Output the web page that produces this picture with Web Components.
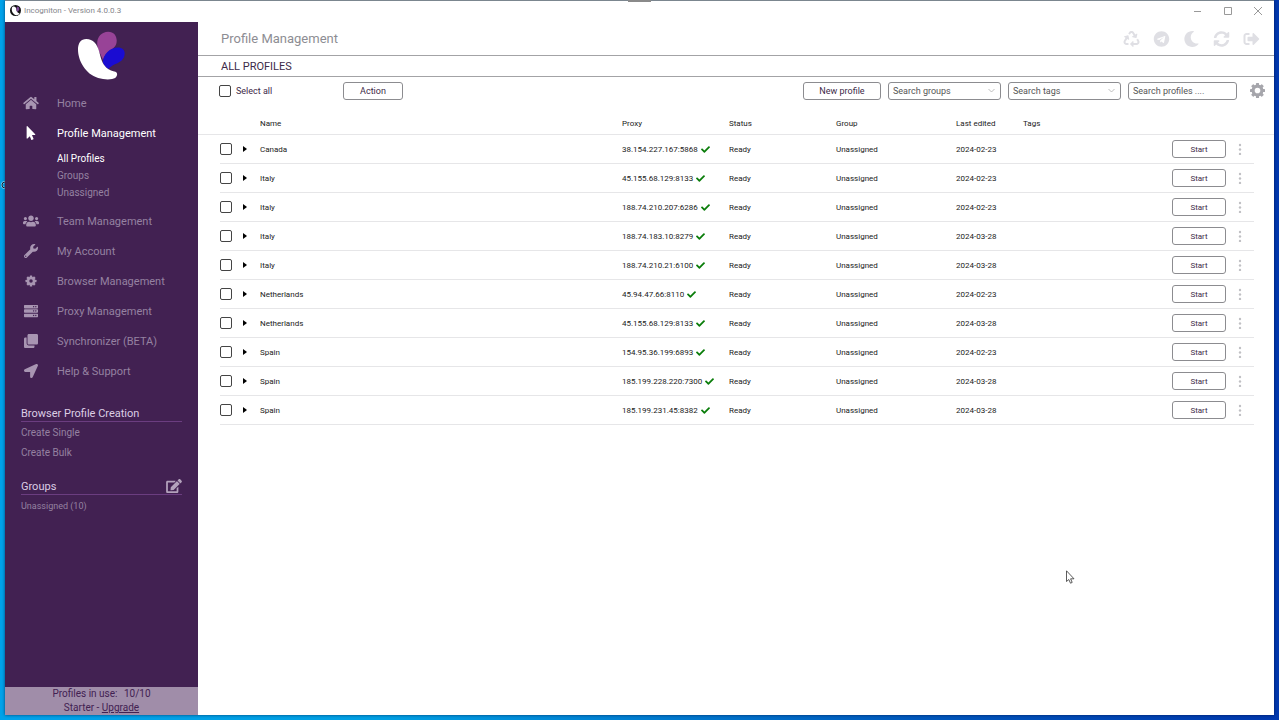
<!DOCTYPE html>
<html lang="en">
<head>
<meta charset="utf-8">
<title>Incogniton - Version 4.0.0.3</title>
<style>
    html, body {
        margin: 0;
        height: 100%;
    }

    body {
        font-family: Roboto, "Liberation Sans", sans-serif;
        font-size: 8px;
        color: #222;
        background: linear-gradient(90deg, #00a2ea 0%, #00a0e4 30%, #0058bc 72%, #0038ae 100%);
        --color-primary: #422152;
        --color-muted: #9581a1;
        --color-icon: #a895b2;
        --color-line: #8c8c90;
    }
</style>
</head>
<body>
<app-window>
    <title-bar slot="title">Incogniton - Version 4.0.0.3</title-bar>
    <side-bar slot="side">
        <nav-item icon="home">Home</nav-item>
        <nav-item icon="pointer" active>Profile Management
            <sub-link slot="sub" active>All Profiles</sub-link>
            <sub-link slot="sub">Groups</sub-link>
            <sub-link slot="sub">Unassigned</sub-link>
        </nav-item>
        <nav-item icon="users">Team Management</nav-item>
        <nav-item icon="wrench">My Account</nav-item>
        <nav-item icon="gear-small">Browser Management</nav-item>
        <nav-item icon="server">Proxy Management</nav-item>
        <nav-item icon="clone">Synchronizer (BETA)</nav-item>
        <nav-item icon="arrow">Help &amp; Support</nav-item>
        <side-section slot="sections" heading="Browser Profile Creation">
            <side-link>Create Single</side-link>
            <side-link>Create Bulk</side-link>
        </side-section>
        <side-section slot="sections" heading="Groups" editable>
            <side-link small>Unassigned (10)</side-link>
        </side-section>
        <plan-info slot="footer" used="10/10" plan="Starter"></plan-info>
    </side-bar>
    <page-header heading="Profile Management" subheading="ALL PROFILES"></page-header>
    <tool-bar></tool-bar>
    <profile-table></profile-table>
</app-window>
<mouse-cursor></mouse-cursor>

<script>
const tooth = (n, y, h, w) => Array.from({ length: n }, (_, i) =>
    `<rect x="${12 - w / 2}" y="${y}" width="${w}" height="${h}" rx="1" transform="rotate(${i * 360 / n} 12 12)"/>`).join('');

// name: [viewBox, markup]
const ICONS = {
    'home': ['0 0 576 512', '<path d="M280.37 148.26L96 300.11V464a16 16 0 0 0 16 16l112.06-.29a16 16 0 0 0 15.92-16V368a16 16 0 0 1 16-16h64a16 16 0 0 1 16 16v95.64a16 16 0 0 0 16 16.05L464 480a16 16 0 0 0 16-16V300L295.67 148.26a12.19 12.19 0 0 0-15.3 0zM571.6 251.47L488 182.56V44.05a12 12 0 0 0-12-12h-56a12 12 0 0 0-12 12v72.61L318.47 43a48 48 0 0 0-61 0L4.34 251.47a12 12 0 0 0-1.6 16.9l25.5 31A12 12 0 0 0 45.15 301l235.22-193.74a12.19 12.19 0 0 1 15.3 0L530.9 301a12 12 0 0 0 16.9-1.6l25.5-31a12 12 0 0 0-1.7-16.93z"/>'],
    'pointer': ['0 0 320 512', '<path d="M302.189 329.126H196.105l55.831 135.993c3.889 9.428-.555 19.999-9.444 23.999l-49.165 21.427c-9.165 4-19.443-.571-23.332-9.714l-53.053-129.136-86.664 89.138C18.729 472.71 0 463.554 0 447.977V18.299C0 1.899 19.921-6.096 30.277 5.443l284.412 292.542c11.472 11.179 3.007 31.141-12.5 31.141z"/>'],
    'users': ['0 0 640 512', '<path d="M96 224c35.3 0 64-28.7 64-64s-28.7-64-64-64-64 28.7-64 64 28.7 64 64 64zm448 0c35.3 0 64-28.7 64-64s-28.7-64-64-64-64 28.7-64 64 28.7 64 64 64zm32 32h-64c-17.6 0-33.5 7.1-45.1 18.6 40.3 22.1 68.9 62 75.1 109.4h66c17.7 0 32-14.3 32-32v-32c0-35.3-28.7-64-64-64zm-256 0c61.9 0 112-50.1 112-112S381.9 32 320 32 208 82.1 208 144s50.1 112 112 112zm76.8 32h-8.3c-20.8 10-43.9 16-68.5 16s-47.6-6-68.5-16h-8.3C179.6 288 128 339.6 128 403.2V432c0 26.5 21.5 48 48 48h288c26.5 0 48-21.5 48-48v-28.8c0-63.6-51.6-115.2-115.2-115.2zm-223.7-13.4C161.5 263.1 145.6 256 128 256H64c-35.3 0-64 28.7-64 64v32c0 17.7 14.3 32 32 32h65.9c6.3-47.4 34.9-87.3 75.2-109.4z"/>'],
    'wrench': ['0 0 512 512', '<path d="M507.73 109.1c-2.24-9.03-13.54-12.09-20.12-5.51l-74.36 74.36-67.88-11.31-11.31-67.88 74.36-74.36c6.62-6.62 3.43-17.9-5.66-20.16-47.38-11.74-99.55.91-136.58 37.93-39.64 39.64-50.55 97.1-34.05 147.2L18.74 402.76c-24.99 24.99-24.99 65.51 0 90.5 24.99 24.99 65.51 24.99 90.5 0l213.21-213.21c50.12 16.71 107.47 5.68 147.37-34.22 37.07-37.07 49.7-89.32 37.91-136.73zM64 472c-13.25 0-24-10.75-24-24 0-13.26 10.75-24 24-24s24 10.74 24 24c0 13.25-10.75 24-24 24z"/>'],
    'gear-small': ['0 0 24 24', `<circle cx="12" cy="12" r="6" fill="none" stroke="currentColor" stroke-width="5"/>${tooth(8, 1, 4, 5)}`],
    'gear': ['0 0 24 24', `<circle cx="12" cy="12" r="7" fill="none" stroke="currentColor" stroke-width="5"/>${tooth(8, 0, 5, 5)}`],
    'server': ['0 0 512 512', '<path fill-rule="evenodd" d="M24 32h464q24 0 24 24v80q0 24-24 24H24q-24 0-24-24V56q0-24 24-24zM432 72a24 24 0 1 0 .1 0zM352 72a24 24 0 1 0 .1 0zM24 192h464q24 0 24 24v80q0 24-24 24H24q-24 0-24-24v-80q0-24 24-24zM432 232a24 24 0 1 0 .1 0zM352 232a24 24 0 1 0 .1 0zM24 352h464q24 0 24 24v80q0 24-24 24H24q-24 0-24-24v-80q0-24 24-24zM432 392a24 24 0 1 0 .1 0zM352 392a24 24 0 1 0 .1 0z"/>'],
    'clone': ['0 0 512 512', '<path d="M464 0c26.51 0 48 21.49 48 48v288c0 26.51-21.49 48-48 48H176c-26.51 0-48-21.49-48-48V48c0-26.51 21.49-48 48-48h288M176 416c-44.112 0-80-35.888-80-80V128H48c-26.51 0-48 21.49-48 48v288c0 26.51 21.49 48 48 48h288c26.51 0 48-21.49 48-48v-48H176z"/>'],
    'arrow': ['0 0 512 512', '<path d="M444.52 3.52L28.74 195.42c-47.97 22.39-31.98 92.75 19.19 92.75h175.91v175.91c0 51.17 70.36 67.17 92.75 19.19l191.9-415.78c15.99-38.39-25.59-79.97-63.97-63.97z"/>'],
    'edit': ['0 0 576 512', '<path d="M402.6 83.2l90.2 90.2c3.8 3.8 3.8 10 0 13.8L274.4 405.6l-92.8 10.3c-12.4 1.4-22.9-9.1-21.5-21.5l10.3-92.8L388.8 83.2c3.8-3.8 10-3.8 13.8 0zm162-22.9l-48.8-48.8c-15.2-15.2-39.9-15.2-55.2 0l-35.4 35.4c-3.8 3.8-3.8 10 0 13.8l90.2 90.2c3.8 3.8 10 3.8 13.8 0l35.4-35.4c15.2-15.3 15.2-40 0-55.2zM384 346.2V448H64V128h229.8c3.2 0 6.2-1.3 8.5-3.5l40-40c7.6-7.6 2.2-20.5-8.5-20.5H48C21.5 64 0 85.5 0 112v352c0 26.5 21.5 48 48 48h352c26.5 0 48-21.5 48-48V306.2c0-10.7-12.9-16-20.5-8.5l-40 40c-2.2 2.3-3.5 5.3-3.5 8.5z"/>'],
    'recycle': ['0 0 512 512', '<path d="M184.561 261.903c3.232 13.997-12.123 24.635-24.068 17.168l-40.736-25.455-50.867 81.402C55.606 356.273 70.96 384 96.012 384H148c6.627 0 12 5.373 12 12v40c0 6.627-5.373 12-12 12H96.115c-75.334 0-121.302-83.048-81.408-146.88l50.822-81.388-40.725-25.448c-12.081-7.547-8.966-25.961 4.879-29.158l110.237-25.45c8.611-1.988 17.201 3.381 19.189 11.99l25.452 110.237zm98.561-182.915l41.289 66.076-40.74 25.457c-12.051 7.528-9 25.953 4.879 29.158l110.237 25.45c8.672 1.999 17.215-3.438 19.189-11.99l25.45-110.237c3.197-13.844-11.99-24.719-24.068-17.168l-40.687 25.424-41.263-66.082c-37.521-60.033-125.209-60.171-162.816 0l-17.963 28.766c-3.51 5.62-1.8 13.021 3.82 16.533l33.919 21.195c5.62 3.512 13.024 1.803 16.536-3.817l17.961-28.743c12.712-20.341 41.973-19.676 54.257-.022zM497.288 301.12l-27.515-44.065c-3.511-5.623-10.916-7.334-16.538-3.821l-33.861 21.159c-5.62 3.512-7.33 10.915-3.818 16.536l27.564 44.112c13.257 21.211-2.057 48.96-27.136 48.96H320V336.02c0-14.213-17.242-21.383-27.313-11.313l-80 79.981c-6.249 6.248-6.249 16.379 0 22.627l80 79.989C302.689 517.308 320 510.3 320 495.989V448h95.88c75.274 0 121.335-82.997 81.408-146.88z"/>'],
    'telegram': ['0 0 496 512', '<path d="M248 8C111 8 0 119 0 256s111 248 248 248 248-111 248-248S385 8 248 8zm121.8 169.9l-40.7 191.8c-3 13.6-11.1 16.9-22.4 10.5l-62-45.7-29.9 28.8c-3.3 3.3-6.1 6.1-12.5 6.1l4.4-63.1 114.9-103.8c5-4.4-1.1-6.9-7.7-2.5l-142 89.4-61.2-19.1c-13.3-4.2-13.6-13.3 2.8-19.7l239.1-92.2c11.1-4 20.8 2.7 17.2 19.5z"/>'],
    'moon': ['0 0 512 512', '<path d="M283.211 512c78.962 0 151.079-35.925 198.857-94.792 7.068-8.708-.639-21.43-11.562-19.35-124.203 23.654-238.262-71.576-238.262-196.954 0-72.222 38.662-138.635 101.498-174.394 9.686-5.512 7.25-20.197-3.756-22.23A258.156 258.156 0 0 0 283.211 0c-141.309 0-256 114.511-256 256 0 141.309 114.511 256 256 256z"/>'],
    'sync': ['0 0 512 512', '<path d="M370.72 133.28C339.458 104.008 298.888 87.962 255.848 88c-77.458.068-144.328 53.178-162.791 126.85-1.344 5.363-6.122 9.15-11.651 9.15H24.103c-7.498 0-13.194-6.807-11.807-14.176C33.933 94.924 134.813 8 256 8c66.448 0 126.791 26.136 171.315 68.685L463.03 40.97C478.149 25.851 504 36.559 504 57.941V192c0 13.255-10.745 24-24 24H345.941c-21.382 0-32.09-25.851-16.971-40.971l41.75-41.749zM32 296h134.059c21.382 0 32.09 25.851 16.971 40.971l-41.75 41.75c31.262 29.273 71.835 45.319 114.876 45.28 77.418-.07 144.315-53.144 162.787-126.849 1.344-5.363 6.122-9.15 11.651-9.15h57.304c7.498 0 13.194 6.807 11.807 14.176C478.067 417.076 377.187 504 256 504c-66.448 0-126.791-26.136-171.315-68.685L48.97 471.03C33.851 486.149 8 475.441 8 454.059V320c0-13.255 10.745-24 24-24z"/>'],
    'sign-out': ['0 0 512 512', '<path d="M497 273L329 441c-15 15-41 4.5-41-17v-96H152c-13.3 0-24-10.7-24-24v-96c0-13.3 10.7-24 24-24h136V88c0-21.4 25.9-32 41-17l168 168c9.3 9.4 9.3 24.6 0 34zM192 436v-40c0-6.6-5.4-12-12-12H96c-17.7 0-32-14.3-32-32V160c0-17.7 14.3-32 32-32h84c6.6 0 12-5.4 12-12V76c0-6.6-5.4-12-12-12H96c-53 0-96 43-96 96v192c0 53 43 96 96 96h84c6.6 0 12-5.4 12-12z"/>'],
    'check': ['0 0 512 512', '<path d="M173.898 439.404l-166.4-166.4c-9.997-9.997-9.997-26.206 0-36.204l36.203-36.204c9.997-9.998 26.207-9.998 36.204 0L192 312.69 432.095 72.596c9.997-9.997 26.207-9.997 36.204 0l36.203 36.204c9.997 9.997 9.997 26.206 0 36.204l-294.4 294.401c-9.998 9.997-26.207 9.997-36.204-.001z"/>'],
    'caret': ['0 0 8 12', '<path d="M2 3l4 3-4 3z"/>'],
    'chevron': ['0 0 12 12', '<path d="M2 4l4 4 4-4" fill="none" stroke="currentColor"/>'],
    'dots': ['0 0 4 12', '<circle cx="2" cy="2" r="1.2"/><circle cx="2" cy="6.5" r="1.2"/><circle cx="2" cy="11" r="1.2"/>'],
    'minimize': ['0 0 10 10', '<path d="M1 5.5h7" stroke="currentColor"/>'],
    'maximize': ['0 0 10 10', '<path d="M1.500 1.500h7v7h-7z" fill="none" stroke="currentColor"/>'],
    'close': ['0 0 10 10', '<path d="M1 1l8 8M9 1L1 9" stroke="currentColor"/>'],
    'logo': ['232 94 146 148', '<path fill="#984397" d="M325 96c17 0 26 12 26 27 0 20-12 24-25 34-10 8-14 17-16 26-8-20-18-35-18-52 0-20 14-35 33-35z"/><path fill="#1a0cd2" d="M355 144c12 0 20 7 20 17 0 20-15 27-28 33-9 4-15 9-21 15-9-6-15-14-17-20 0-24 22-45 46-45z"/><path fill="#fff" d="M259 118c21 0 33 15 39 38 5 21 9 36 21 48 9 9 21 11 28 13 8 3 6 14-1 19-8 5-31 6-51 0-39-12-61-53-61-86 0-20 9-32 25-32z"/>'],
    'badge': ['0 0 24 24', '<circle cx="12" cy="12" r="12" fill="#111"/><path fill="#fff" d="M8 3c4 0 6 3 6 7s2 7 7 9c-4 4-9 4-12 1C5 17 3 12 4 7c0-3 2-4 4-4z"/><path fill="#7d4a96" d="M16 3c4 1 5 4 4 8-1 2-3 2-4 5-2-4-3-11 0-13z"/>'],
};

class AppIcon extends HTMLElement {
    constructor() {
        super();
        this.attachShadow({ mode: 'open' });
    }

    connectedCallback() {
        const [box, markup] = ICONS[this.getAttribute('name')];
        this.shadowRoot.innerHTML = `
        <style>
            :host {
                display: block;
                flex: none;
            }

            svg {
                display: block;
                width: 100%;
                height: 100%;
                fill: currentColor;
            }
        </style>
        <svg viewBox="${box}" aria-hidden="true">${markup}</svg>`;
    }
}
customElements.define('app-icon', AppIcon);

class AppWindow extends HTMLElement {
    constructor() {
        super();
        this.attachShadow({ mode: 'open' });
        this.shadowRoot.innerHTML = `
        <style>
            :host {
                display: grid;
                box-sizing: border-box;
                min-height: 100%;
                padding: 0 5px 5px;
            }

            .frame {
                display: grid;
                grid-template: auto 1fr / 193px 1fr;
                background: #fff;
                border-top: 1px solid #7b868f;
                box-shadow: 0 0 3px rgba(0, 0, 40, 0.6);
            }

            slot[name=title] {
                display: block;
                grid-column: 1 / -1;
            }

            slot[name=side] {
                display: grid;
            }

            .grip {
                position: absolute;
                top: 0;
                left: calc(50% - 12px);
                width: 23px;
                height: 2px;
                background: #8a8a8a;
            }

            .edge {
                position: absolute;
                top: 181px;
                left: 0;
                width: 5px;
                height: 9px;
            }
        </style>
        <div class="frame">
            <slot name="title"></slot>
            <slot name="side"></slot>
            <main><slot></slot></main>
        </div>
        <div class="grip"></div>
        <svg class="edge" viewBox="0 0 5 9"><circle cx="5" cy="4" r="3" fill="none" stroke="#7fcdf0" stroke-width="2"/><circle cx="5" cy="4" r="3" fill="none" stroke="#123"/></svg>`;
    }
}
customElements.define('app-window', AppWindow);

class TitleBar extends HTMLElement {
    constructor() {
        super();
        this.attachShadow({ mode: 'open' });
        this.shadowRoot.innerHTML = `
        <style>
            :host {
                display: flex;
                align-items: center;
                gap: 3px;
                height: 21px;
                padding: 0 10px 2px 5px;
                box-sizing: border-box;
                color: #85858b;
            }

            .title {
                flex: 1;
            }

            .badge {
                width: 11px;
                height: 11px;
            }

            .controls {
                display: flex;
                gap: 18px;
            }

            button {
                padding: 1px;
                border: 0;
                background: none;
                color: #999;
            }

            button app-icon {
                width: 10px;
                height: 10px;
            }
        </style>
        <app-icon class="badge" name="badge"></app-icon>
        <span class="title"><slot></slot></span>
        <div class="controls">
            <button aria-label="Minimize"><app-icon name="minimize"></app-icon></button>
            <button aria-label="Maximize"><app-icon name="maximize"></app-icon></button>
            <button aria-label="Close"><app-icon name="close"></app-icon></button>
        </div>`;
    }
}
customElements.define('title-bar', TitleBar);

class SideBar extends HTMLElement {
    constructor() {
        super();
        this.attachShadow({ mode: 'open' });
        this.shadowRoot.innerHTML = `
        <style>
            :host {
                display: flex;
                flex-direction: column;
                background: var(--color-primary);
                color: var(--color-muted);
            }

            .logo {
                width: 49px;
                height: 49px;
                margin: 9px auto 8px;
            }

            .sections {
                display: flex;
                flex-direction: column;
                gap: 15px;
                flex: 1;
                padding: 19px 16px;
            }
        </style>
        <app-icon class="logo" name="logo"></app-icon>
        <nav><slot></slot></nav>
        <div class="sections"><slot name="sections"></slot></div>
        <slot name="footer"></slot>`;
    }
}
customElements.define('side-bar', SideBar);

class NavItem extends HTMLElement {
    constructor() {
        super();
        this.attachShadow({ mode: 'open' });
    }

    connectedCallback() {
        this.shadowRoot.innerHTML = `
        <style>
            :host {
                display: block;
                font-size: 11px;
            }

            :host([active]) {
                color: #fff;
            }

            a {
                display: grid;
                grid-template-columns: 52px 1fr;
                align-items: center;
                height: 30px;
                color: inherit;
                text-decoration: none;
            }

            app-icon {
                justify-self: center;
                width: 16px;
                height: 14px;
                color: var(--color-icon);
            }

            :host([active]) app-icon {
                color: #fff;
            }

            :host([icon=gear-small]) app-icon {
                height: 12px;
            }

            .sub {
                padding: 2px 0 5px 52px;
            }
        </style>
        <a href="#"><app-icon name="${this.getAttribute('icon')}"></app-icon><span><slot></slot></span></a>
        ${this.querySelector('sub-link') ? '<div class="sub"><slot name="sub"></slot></div>' : ''}`;
    }
}
customElements.define('nav-item', NavItem);

class SubLink extends HTMLElement {
    constructor() {
        super();
        this.attachShadow({ mode: 'open' });
        this.shadowRoot.innerHTML = `
        <style>
            :host {
                display: block;
                font-size: 10px;
                line-height: 17px;
                color: var(--color-muted);
            }

            :host([active]) {
                color: #fff;
            }

            a {
                color: inherit;
                text-decoration: none;
            }
        </style>
        <a href="#"><slot></slot></a>`;
    }
}
customElements.define('sub-link', SubLink);

class SideSection extends HTMLElement {
    constructor() {
        super();
        this.attachShadow({ mode: 'open' });
    }

    connectedCallback() {
        this.shadowRoot.innerHTML = `
        <style>
            :host {
                display: block;
            }

            header {
                display: flex;
                justify-content: space-between;
                align-items: center;
                height: 16px;
                border-bottom: 1px solid #6b3d80;
                margin-bottom: 1px;
            }

            h2 {
                margin: 0;
                font-size: 11px;
                font-weight: normal;
                color: #dccde4;
            }

            button {
                padding: 0;
                border: 0;
                background: none;
                color: #b3a2bc;
            }

            app-icon {
                width: 16px;
                height: 14px;
            }
        </style>
        <header>
            <h2>${this.getAttribute('heading')}</h2>
            ${this.hasAttribute('editable') ? '<button aria-label="Edit groups"><app-icon name="edit"></app-icon></button>' : ''}
        </header>
        <slot></slot>`;
    }
}
customElements.define('side-section', SideSection);

class SideLink extends HTMLElement {
    constructor() {
        super();
        this.attachShadow({ mode: 'open' });
        this.shadowRoot.innerHTML = `
        <style>
            :host {
                display: block;
                font-size: 10px;
                line-height: 20px;
            }

            :host([small]) {
                font-size: 9px;
            }

            a {
                color: inherit;
                text-decoration: none;
            }
        </style>
        <a href="#"><slot></slot></a>`;
    }
}
customElements.define('side-link', SideLink);

class PlanInfo extends HTMLElement {
    constructor() {
        super();
        this.attachShadow({ mode: 'open' });
    }

    connectedCallback() {
        this.shadowRoot.innerHTML = `
        <style>
            :host {
                display: block;
                font-size: 10px;
                line-height: 14px;
                text-align: center;
                color: var(--color-primary);
                background: #a08da9;
            }

            .used {
                margin-left: 4px;
            }

            a {
                color: inherit;
            }
        </style>
        <div>Profiles in use: <span class="used">${this.getAttribute('used')}</span></div>
        <div>${this.getAttribute('plan')} - <a href="#">Upgrade</a></div>`;
    }
}
customElements.define('plan-info', PlanInfo);

class PageHeader extends HTMLElement {
    constructor() {
        super();
        this.attachShadow({ mode: 'open' });
    }

    connectedCallback() {
        const actions = ['recycle', 'telegram', 'moon', 'sync', 'sign-out'];
        this.shadowRoot.innerHTML = `
        <style>
            :host {
                display: block;
            }

            .top, h2 {
                display: flex;
                align-items: center;
                box-sizing: border-box;
                border-bottom: 1px solid #a3a3a6;
                margin: 0;
                padding: 0 14px 0 23px;
                font-weight: normal;
            }

            .top {
                justify-content: space-between;
                height: 34px;
            }

            h1 {
                margin: 0;
                font-size: 13px;
                font-weight: normal;
                color: #8d8d93;
            }

            h2 {
                height: 21px;
                font-size: 11px;
                color: #3d2a48;
            }

            .actions {
                display: flex;
                gap: 13px;
            }

            button {
                padding: 0;
                border: 0;
                background: none;
                color: #dfdfe4;
            }

            app-icon {
                width: 17px;
                height: 16px;
            }
        </style>
        <div class="top">
            <h1>${this.getAttribute('heading')}</h1>
            <div class="actions">${actions.map(a => `<button aria-label="${a}"><app-icon name="${a}"></app-icon></button>`).join('')}</div>
        </div>
        <h2>${this.getAttribute('subheading')}</h2>`;
    }
}
customElements.define('page-header', PageHeader);

// shared by every element that draws a control
const CONTROL_STYLE = `
    .box, select, input[type=text] {
        box-sizing: border-box;
        height: 18px;
        border: 1px solid var(--color-line);
        border-radius: 3px;
        background: #fff;
        font: inherit;
        color: #3d2a48;
    }

    .box {
        padding: 0;
    }

    input[type=checkbox] {
        appearance: none;
        display: block;
        box-sizing: border-box;
        width: 12px;
        height: 12px;
        margin: 0;
        border: 1px solid #444;
        border-radius: 2px;
        background: #fff;
    }
`;

class ToolBar extends HTMLElement {
    constructor() {
        super();
        this.attachShadow({ mode: 'open' });
        this.shadowRoot.innerHTML = `
        <style>
            ${CONTROL_STYLE}

            :host {
                display: flex;
                align-items: center;
                gap: 7px;
                height: 27px;
                padding: 0 9px 0 21px;
                font-size: 9px;
            }

            .all {
                display: flex;
                align-items: center;
                gap: 5px;
                width: 117px;
                color: #3d2a48;
            }

            .action {
                width: 60px;
            }

            .new {
                width: 78px;
                margin-left: auto;
            }

            .drop {
                display: grid;
                align-items: center;
                width: 113px;
            }

            .drop > * {
                grid-area: 1 / 1;
            }

            .drop app-icon {
                justify-self: end;
                width: 9px;
                height: 9px;
                margin-right: 5px;
                color: #aaa;
                pointer-events: none;
            }

            select {
                appearance: none;
                padding: 0 4px;
                color: #555;
            }

            input[type=text] {
                width: 109px;
                padding: 0 4px;
            }

            ::placeholder {
                color: #555;
                opacity: 1;
            }

            .settings {
                padding: 0;
                border: 0;
                margin-left: 6px;
                background: none;
                color: #a6a6ac;
            }

            .settings app-icon {
                width: 15px;
                height: 15px;
            }
        </style>
        <div class="all"><input type="checkbox" id="all"><label for="all">Select all</label></div>
        <button class="box action">Action</button>
        <button class="box new">New profile</button>
        <div class="drop">
            <select aria-label="Search groups"><option>Search groups</option></select>
            <app-icon name="chevron"></app-icon>
        </div>
        <div class="drop">
            <select aria-label="Search tags"><option>Search tags</option></select>
            <app-icon name="chevron"></app-icon>
        </div>
        <input type="text" aria-label="Search profiles" placeholder="Search profiles ....">
        <button class="settings" aria-label="Settings"><app-icon name="gear"></app-icon></button>`;
    }
}
customElements.define('tool-bar', ToolBar);

const PROFILES = [
    ['Canada', '38.154.227.167:5868', '2024-02-23'],
    ['Italy', '45.155.68.129:8133', '2024-02-23'],
    ['Italy', '188.74.210.207:6286', '2024-02-23'],
    ['Italy', '188.74.183.10:8279', '2024-03-28'],
    ['Italy', '188.74.210.21:6100', '2024-03-28'],
    ['Netherlands', '45.94.47.66:8110', '2024-02-23'],
    ['Netherlands', '45.155.68.129:8133', '2024-03-28'],
    ['Spain', '154.95.36.199:6893', '2024-02-23'],
    ['Spain', '185.199.228.220:7300', '2024-03-28'],
    ['Spain', '185.199.231.45:8382', '2024-03-28'],
];

class ProfileTable extends HTMLElement {
    constructor() {
        super();
        this.attachShadow({ mode: 'open' });
    }

    connectedCallback() {
        this._render();
    }

    _row([name, proxy, edited]) {
        return `
        <tr>
            <td class="pad"></td>
            <td><input type="checkbox" aria-label="Select ${name}"></td>
            <td><button class="plain" aria-label="Expand ${name}"><app-icon class="caret" name="caret"></app-icon></button></td>
            <td>${name}</td>
            <td><span class="proxy">${proxy}<app-icon class="check" name="check"></app-icon></span></td>
            <td>Ready</td>
            <td>Unassigned</td>
            <td>${edited}</td>
            <td></td>
            <td><button class="box start">Start</button></td>
            <td><button class="plain" aria-label="More"><app-icon class="dots" name="dots"></app-icon></button></td>
            <td class="pad"></td>
        </tr>`;
    }

    _render() {
        this.shadowRoot.innerHTML = `
        <style>
            ${CONTROL_STYLE}

            :host {
                display: block;
            }

            table {
                width: 100%;
                table-layout: fixed;
                border-collapse: separate;
                border-spacing: 0;
            }

            th, td {
                box-sizing: border-box;
                height: 29px;
                padding: 0;
                text-align: left;
                font-weight: normal;
                border-bottom: 1px solid #e6e6e8;
            }

            th {
                height: 31px;
                padding-top: 9px;
            }

            td.pad {
                border-bottom: 0;
            }

            .proxy {
                display: flex;
                align-items: center;
                gap: 3px;
            }

            .check {
                width: 9px;
                height: 9px;
                color: #0a7d0a;
            }

            .plain {
                display: block;
                padding: 0;
                border: 0;
                background: none;
                color: #000;
            }

            .caret {
                width: 8px;
                height: 12px;
            }

            .dots {
                width: 4px;
                height: 12px;
                color: #c0c0c4;
            }

            .start {
                width: 54px;
            }
        </style>
        <table>
            <colgroup>
                <col style="width: 22px"><col style="width: 21px"><col style="width: 19px"><col>
                <col style="width: 107px"><col style="width: 107px"><col style="width: 120px"><col style="width: 67px">
                <col style="width: 149px"><col style="width: 66px"><col style="width: 16px"><col style="width: 20px">
            </colgroup>
            <thead>
                <tr><th></th><th></th><th></th><th>Name</th><th>Proxy</th><th>Status</th><th>Group</th><th>Last edited</th><th>Tags</th><th></th><th></th><th></th></tr>
            </thead>
            <tbody>${PROFILES.map(p => this._row(p)).join('')}</tbody>
        </table>`;
    }
}
customElements.define('profile-table', ProfileTable);

class MouseCursor extends HTMLElement {
    constructor() {
        super();
        this.attachShadow({ mode: 'open' });
        this.shadowRoot.innerHTML = `
        <style>
            :host {
                position: absolute;
                left: 1066px;
                top: 570px;
                width: 9px;
                height: 14px;
                pointer-events: none;
            }

            svg {
                display: block;
            }
        </style>
        <svg width="9" height="14" viewBox="0 0 9 14"><path d="M.5 .8v10.700l2.300-2 1.700 3.700 1.700-.8-1.600-3.600h3.400z" fill="#fff" stroke="#333" stroke-width=".8"/></svg>`;
    }
}
customElements.define('mouse-cursor', MouseCursor);
</script>
</body>
</html>
